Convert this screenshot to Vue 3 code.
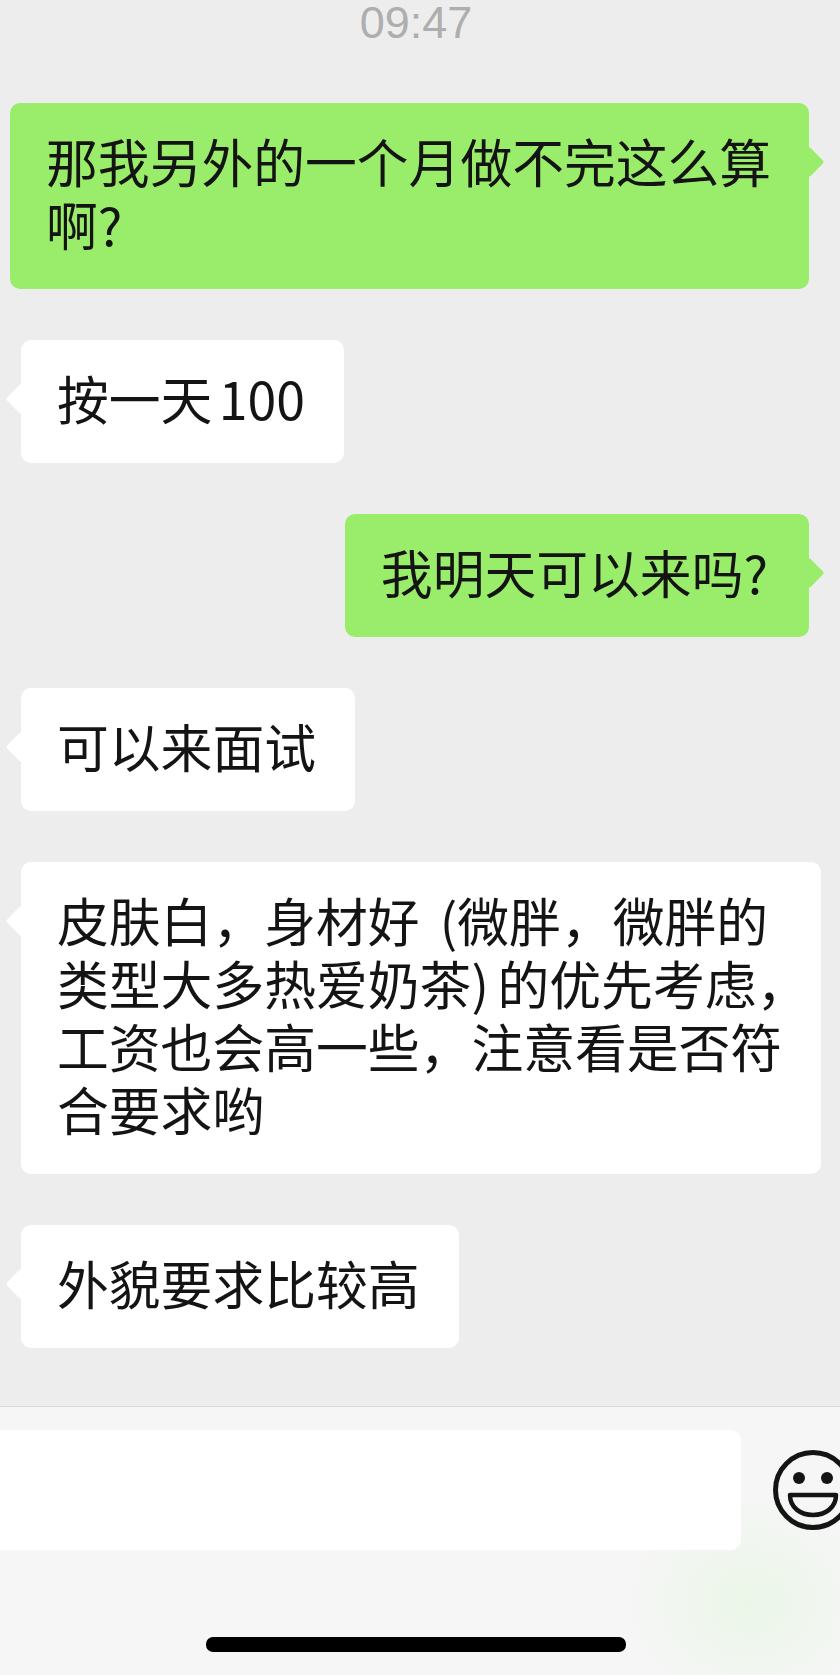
<template>
  <div class="chat-page">
    <div class="time">09:47</div>

    <div class="msg-list">
      <div
        v-for="(msg, i) in messages"
        :key="i"
        class="bubble"
        :class="msg.mine ? 'mine' : 'other'"
      >{{ msg.text }}</div>
    </div>

    <div class="footer">
      <div class="input-row">
        <div class="input-box"></div>
        <svg class="emoji" viewBox="0 0 80 80" width="80" height="80">
          <circle cx="40" cy="40" r="37.5" fill="none" stroke="#141414" stroke-width="5" />
          <circle cx="26" cy="28" r="6" fill="#141414" />
          <circle cx="54" cy="28" r="6" fill="#141414" />
          <path
            d="M17 45 H63 C63 58 52 65 40 65 C28 65 17 58 17 45 Z"
            fill="none"
            stroke="#141414"
            stroke-width="4.5"
            stroke-linejoin="round"
          />
        </svg>
      </div>
      <div class="home-bar"></div>
    </div>
  </div>
</template>

<script setup>
const messages = [
  { mine: true, text: '那我另外的一个月做不完这么算\n啊?' },
  { mine: false, text: '按一天\u200a\u200a100' },
  { mine: true, text: '我明天可以来吗?' },
  { mine: false, text: '可以来面试' },
  { mine: false, text: '皮肤白\uff0c身材好 \u2006(微胖\uff0c微胖的\n类型大多热爱奶茶)\u2006的优先考虑\uff0c\n工资也会高一些\uff0c注意看是否符\n合要求哟' },
  { mine: false, text: '外貌要求比较高' }
]
</script>

<style scoped>
.chat-page {
  display: flex;
  flex-direction: column;
  height: 1675px;
  overflow: hidden;
  background: #ededed;
  font-family: "Noto Sans CJK SC", "Liberation Sans", sans-serif;
}

.time {
  height: 46px;
  margin-bottom: 57px;
  padding-right: 8px;
  font-family: "Liberation Sans", sans-serif;
  font-size: 45px;
  line-height: 46px;
  text-align: center;
  color: #aeaeae;
}

.msg-list {
  display: flex;
  flex-direction: column;
  gap: 51px;
  padding: 0 19px 0 10px;
}

.bubble {
  position: relative;
  box-sizing: border-box;
  width: fit-content;
  padding: 26px 39px 34px 36px;
  border-radius: 10px;
  font-size: 51.8px;
  line-height: 63px;
  color: #141414;
  white-space: pre;
}

.bubble::after {
  content: "";
  position: absolute;
  top: 48px;
  width: 22px;
  height: 22px;
  border-radius: 3px;
  background: inherit;
  transform: rotate(45deg);
}

.mine {
  align-self: flex-end;
  max-width: 799px;
  margin-right: 12px;
  padding-right: 41px;
  background: #99ed6b;
}

.mine::after {
  right: -11px;
}

.other {
  max-width: 800px;
  margin-left: 11px;
  background: #fff;
}

.other::after {
  left: -11px;
}

.footer {
  margin-top: auto;
  height: 269px;
  box-sizing: border-box;
  border-top: 1px solid #d9d9d9;
  padding-top: 23px;
  background: radial-gradient(ellipse 130px 110px at 750px 195px, #ebf6e8, rgba(246, 246, 246, 0)) #f6f6f6;
}

.input-row {
  display: flex;
  align-items: flex-start;
  overflow: hidden;
}

.input-box {
  flex: 0 0 741px;
  height: 120px;
  border-radius: 0 10px 10px 0;
  background: #fff;
}

.emoji {
  flex: 0 0 auto;
  margin: 20px 0 0 32px;
}

.home-bar {
  width: 420px;
  height: 15px;
  margin: 87px 0 0 206px;
  border-radius: 7px;
  background: #000;
}
</style>

<style>
body {
  background: #ededed;
}
</style>
